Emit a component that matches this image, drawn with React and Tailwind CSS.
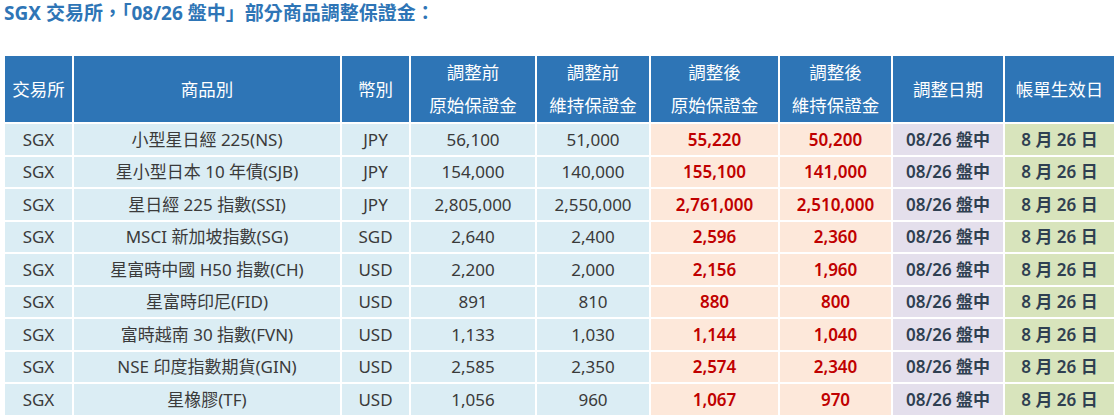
import React from "react";

const rows = [
  ["小型星日經 225(NS)", "JPY", "56,100", "51,000", "55,220", "50,200"],
  ["星小型日本 10 年債(SJB)", "JPY", "154,000", "140,000", "155,100", "141,000"],
  ["星日經 225 指數(SSI)", "JPY", "2,805,000", "2,550,000", "2,761,000", "2,510,000"],
  ["MSCI 新加坡指數(SG)", "SGD", "2,640", "2,400", "2,596", "2,360"],
  ["星富時中國 H50 指數(CH)", "USD", "2,200", "2,000", "2,156", "1,960"],
  ["星富時印尼(FID)", "USD", "891", "810", "880", "800"],
  ["富時越南 30 指數(FVN)", "USD", "1,133", "1,030", "1,144", "1,040"],
  ["NSE 印度指數期貨(GIN)", "USD", "2,585", "2,350", "2,574", "2,340"],
  ["星橡膠(TF)", "USD", "1,056", "960", "1,067", "970"],
];

const th = "bg-[#2e75b6] text-white font-normal text-[17.5px] border-2 border-white text-center";
const td = "border-2 border-white text-center h-[32.5px] p-0";

export default function App() {
  return (
    <div
      className="w-[1120px] h-[419px] bg-white overflow-hidden px-[4px]"
      style={{ fontFamily: '"Noto Sans", "Noto Sans CJK TC", sans-serif' }}
    >
      <h2 className="text-[19px] font-bold text-[#2e75b6] leading-[27px]">
        SGX 交易所，「08/26 盤中」部分商品調整保證金：
      </h2>

      <table className="table-fixed border-collapse mt-[27px] w-[1111px] -ml-[1px] text-[17px]">
        <colgroup>
          <col className="w-[69px]" />
          <col className="w-[268px]" />
          <col className="w-[69px]" />
          <col className="w-[126px]" />
          <col className="w-[114px]" />
          <col className="w-[129px]" />
          <col className="w-[113px]" />
          <col className="w-[112px]" />
          <col className="w-[111px]" />
        </colgroup>
        <thead>
          <tr className="h-[67px]">
            <th className={th}>交易所</th>
            <th className={th}>商品別</th>
            <th className={th}>幣別</th>
            <th className={th + " leading-[33px]"}>調整前<br />原始保證金</th>
            <th className={th + " leading-[33px]"}>調整前<br />維持保證金</th>
            <th className={th + " leading-[33px]"}>調整後<br />原始保證金</th>
            <th className={th + " leading-[33px]"}>調整後<br />維持保證金</th>
            <th className={th}>調整日期</th>
            <th className={th}>帳單生效日</th>
          </tr>
        </thead>
        <tbody>
          {rows.map((r) => (
            <tr key={r[0]}>
              <td className={td + " bg-[#dbedf4] text-[#3a3a3a]"}>SGX</td>
              <td className={td + " bg-[#dbedf4] text-[#3a3a3a]"}>{r[0]}</td>
              <td className={td + " bg-[#dbedf4] text-[#3a3a3a]"}>{r[1]}</td>
              <td className={td + " bg-[#dbedf4] text-[#3a3a3a]"}>{r[2]}</td>
              <td className={td + " bg-[#dbedf4] text-[#3a3a3a]"}>{r[3]}</td>
              <td className={td + " bg-[#fde8da] text-[#c00000] font-semibold"}>{r[4]}</td>
              <td className={td + " bg-[#fde8da] text-[#c00000] font-semibold"}>{r[5]}</td>
              <td className={td + " bg-[#e4dfec] text-[#2f3f51] font-semibold"}>08/26 盤中</td>
              <td className={td + " bg-[#d8e4bc] text-[#2f3f51] font-semibold"}>8 月 26 日</td>
            </tr>
          ))}
        </tbody>
      </table>
    </div>
  );
}
